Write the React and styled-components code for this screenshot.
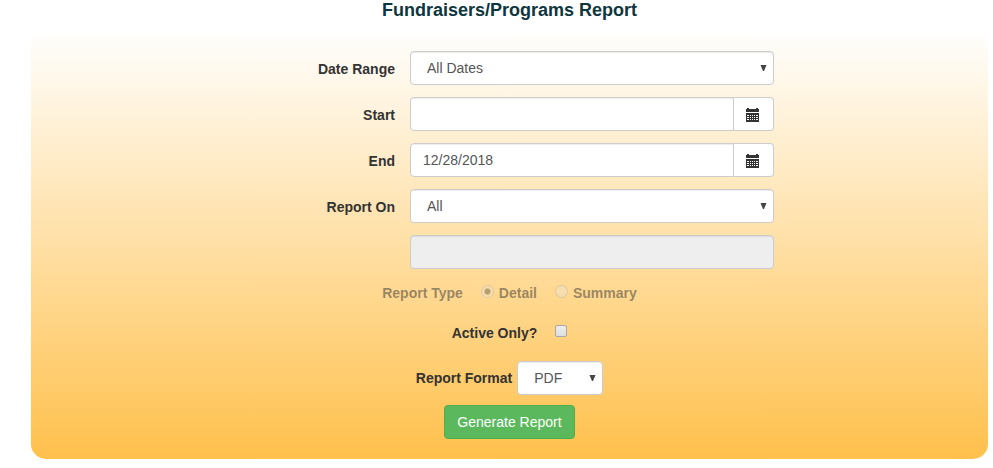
import React, { useState } from 'react';
import styled, { createGlobalStyle } from 'styled-components';

const GlobalStyle = createGlobalStyle`
  *, *::before, *::after {
    box-sizing: border-box;
  }

  body {
    margin: 0;
    background: #fff;
    color: #333;
    font-family: "Liberation Sans", Arial, sans-serif;
    font-size: 14px;
    line-height: 20px;
  }
`;

const Page = styled.main`
  padding: 0 5px 8px 31px;
`;

const Title = styled.h1`
  margin: 0 0 8px;
  color: #0f3640;
  font-size: 18px;
  font-weight: bold;
  line-height: 20px;
  text-align: center;
`;

const Panel = styled.form`
  padding: 23px 0 20px;
  border-radius: 15px;
  background: linear-gradient(to bottom, #fff 0%, #ffc04c 100%);
`;

const Field = styled.div`
  display: grid;
  grid-template-columns: 379fr 364fr 214fr;
  margin-bottom: 12px;
`;

const FieldLabel = styled.label`
  padding: 8px 15px 0 0;
  font-weight: bold;
  text-align: right;
`;

const Control = styled.div`
  grid-column: 2;
  display: flex;
`;

const TextInput = styled.input`
  flex: 1;
  min-width: 0;
  height: 34px;
  padding: 6px 12px;
  border: 1px solid #ccc;
  border-radius: ${props => (props.$grouped ? '4px 0 0 4px' : '4px')};
  background: #fff;
  box-shadow: inset 0 1px 1px rgba(0, 0, 0, 0.075);
  color: #555;
  font: inherit;

  &:disabled {
    background: #eee;
  }
`;

const CalendarButton = styled.button`
  display: flex;
  align-items: center;
  justify-content: center;
  width: 40px;
  height: 34px;
  padding: 2px 2px 0 0;
  border: 1px solid #ccc;
  border-left: 0;
  border-radius: 0 4px 4px 0;
  background: #fff;
  color: #333;
  cursor: pointer;
`;

const SelectWrap = styled.div`
  position: relative;
  width: ${props => props.$width || '100%'};
`;

const StyledSelect = styled.select`
  display: block;
  width: 100%;
  height: 34px;
  padding: 6px 20px 6px 16px;
  border: 1px solid #ccc;
  border-radius: 4px;
  background: #fff;
  box-shadow: inset 0 1px 1px rgba(0, 0, 0, 0.075);
  color: #555;
  font: inherit;
  appearance: none;
`;

const Arrow = styled.svg`
  position: absolute;
  top: 14px;
  right: 7px;
  pointer-events: none;
`;

const Row = styled.div`
  display: flex;
  align-items: center;
  justify-content: center;
  gap: ${props => props.$gap || '5px'};
  margin-bottom: ${props => props.$space || '0'};
`;

const TypeGroup = styled(Row)`
  padding-top: 2px;
  color: rgba(51, 51, 51, 0.5);
  font-weight: bold;
`;

const Option = styled.label`
  display: flex;
  gap: 5px;
`;

const Radio = styled.input`
  width: 13px;
  height: 13px;
  margin: 2px 0 0;
  border: 1px solid rgba(120, 110, 95, 0.2);
  border-radius: 50%;
  background: ${props =>
    props.checked
      ? 'radial-gradient(circle, rgba(70, 65, 50, 0.4) 0 2px, rgba(235, 230, 220, 0.4) 4px)'
      : 'rgba(235, 230, 220, 0.4)'};
  appearance: none;
`;

const Checkbox = styled.input`
  width: 12px;
  height: 12px;
  margin: 0 0 4px;
  border: 1px solid #a8a8a8;
  border-radius: 2px;
  background: linear-gradient(to bottom, #ededed, #dedede);
  appearance: none;

  &:checked {
    background: #555;
  }
`;

const BoldLabel = styled.label`
  font-weight: bold;
`;

const SubmitButton = styled.button`
  height: 34px;
  padding: 6px 12px;
  border: 1px solid #4cae4c;
  border-radius: 4px;
  background: #5cb85c;
  color: #fff;
  font: inherit;
  cursor: pointer;
`;

const CalendarIcon = () => (
  <svg width="13" height="14" viewBox="0 0 13 14" fill="currentColor" shapeRendering="crispEdges" aria-hidden="true">
    <path d="M0 1h1V0h2v1h7V0h2v1h1v3H0z" />
    <path
      fillRule="evenodd"
      d="M0 5h13v9H0z
        M1 7v1h2V7z M4 7v1h1V7z M6 7v1h1V7z M8 7v1h1V7z M10 7v1h2V7z
        M1 9v1h2V9z M4 9v1h1V9z M6 9v1h1V9z M8 9v1h1V9z M10 9v1h2V9z
        M1 11v1h2v-1z M4 11v1h1v-1z M6 11v1h1v-1z M8 11v1h1v-1z M10 11v1h2v-1z"
    />
  </svg>
);

const Select = ({ id, options, width }) => (
  <SelectWrap $width={width}>
    <StyledSelect id={id}>
      {options.map(option => (
        <option key={option}>{option}</option>
      ))}
    </StyledSelect>
    <Arrow width="7" height="6" viewBox="0 0 7 6" aria-hidden="true">
      <path d="M0.5 0h6L4 6H3z" fill="#444" />
    </Arrow>
  </SelectWrap>
);

const DateField = ({ id, label, value, onChange }) => (
  <Field>
    <FieldLabel htmlFor={id}>{label}</FieldLabel>
    <Control>
      <TextInput $grouped id={id} type="text" value={value} onChange={e => onChange(e.target.value)} />
      <CalendarButton type="button" aria-label={`Choose ${label.toLowerCase()} date`}>
        <CalendarIcon />
      </CalendarButton>
    </Control>
  </Field>
);

const App = () => {
  const [start, setStart] = useState('');
  const [end, setEnd] = useState('12/28/2018');

  return (
    <Page>
      <GlobalStyle />
      <Title>Fundraisers/Programs Report</Title>
      <Panel onSubmit={e => e.preventDefault()}>
        <Field>
          <FieldLabel htmlFor="range">Date Range</FieldLabel>
          <Control>
            <Select id="range" options={['All Dates']} />
          </Control>
        </Field>
        <DateField id="start" label="Start" value={start} onChange={setStart} />
        <DateField id="end" label="End" value={end} onChange={setEnd} />
        <Field>
          <FieldLabel htmlFor="reportOn">Report On</FieldLabel>
          <Control>
            <Select id="reportOn" options={['All']} />
          </Control>
        </Field>
        <Field>
          <Control>
            <TextInput type="text" aria-label="Report on name" disabled />
          </Control>
        </Field>
        <TypeGroup role="radiogroup" aria-labelledby="typeLabel" $gap="18px" $space="20px">
          <span id="typeLabel">Report Type</span>
          <Option>
            <Radio type="radio" name="type" checked disabled readOnly />
            Detail
          </Option>
          <Option>
            <Radio type="radio" name="type" disabled />
            Summary
          </Option>
        </TypeGroup>
        <Row $gap="18px" $space="18px">
          <BoldLabel htmlFor="active">Active Only?</BoldLabel>
          <Checkbox id="active" type="checkbox" />
        </Row>
        <Row $space="10px">
          <BoldLabel htmlFor="format">Report Format</BoldLabel>
          <Select id="format" options={['PDF']} width="86px" />
        </Row>
        <Row>
          <SubmitButton type="submit">Generate Report</SubmitButton>
        </Row>
      </Panel>
    </Page>
  );
};

export default App;
